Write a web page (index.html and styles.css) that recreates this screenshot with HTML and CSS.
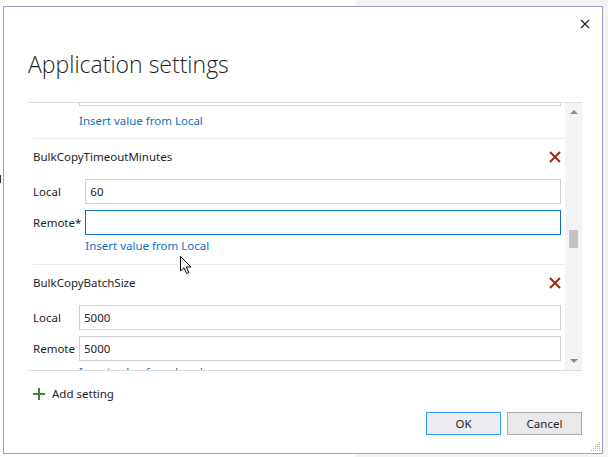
FILE: index.html
```html
<!DOCTYPE html>
<html lang="en">
<head>
    <meta charset="UTF-8">
    <title>Application settings</title>
    <link rel="stylesheet" href="styles.css">
</head>
<body>

    <div class="edge-mark"></div>

    <div class="dialog">
        <div class="dialog-top">
            <button class="close-btn" title="Close">
                <svg width="10" height="10" viewBox="0 0 10 10"><path d="M1 1 L9 9 M9 1 L1 9" stroke="#1e1e1e" stroke-width="1.2" fill="none"/></svg>
            </button>
        </div>

        <h1 class="dialog-title">Application settings</h1>

        <div class="settings-list">
            <div class="settings-scroll">
                <!-- posición de desplazamiento de la lista -->
                <div class="settings-items" style="margin-top: -22px;">

                    <!-- ajuste anterior, solo se ve su parte inferior -->
                    <div class="setting setting-partial">
                        <div class="setting-fields">
                            <input class="field-input" type="text" value="">
                            <a class="insert-link" href="#">Insert value from Local</a>
                        </div>
                    </div>

                    <div class="setting">
                        <div class="setting-head">
                            <span class="setting-name">BulkCopyTimeoutMinutes</span>
                            <button class="remove-btn"><svg width="12" height="12" viewBox="0 0 12 12"><path d="M1 1 L11 11 M11 1 L1 11" stroke="#a4260e" stroke-width="2" fill="none"/></svg></button>
                        </div>
                        <div class="setting-fields">
                            <label class="field-label">Local</label>
                            <input class="field-input" type="text" value="60">
                            <label class="field-label">Remote*</label>
                            <input class="field-input is-focused" type="text" value="">
                            <a class="insert-link" href="#">Insert value from Local</a>
                        </div>
                    </div>

                    <div class="setting">
                        <div class="setting-head">
                            <span class="setting-name">BulkCopyBatchSize</span>
                            <button class="remove-btn"><svg width="12" height="12" viewBox="0 0 12 12"><path d="M1 1 L11 11 M11 1 L1 11" stroke="#a4260e" stroke-width="2" fill="none"/></svg></button>
                        </div>
                        <div class="setting-fields">
                            <label class="field-label">Local</label>
                            <input class="field-input" type="text" value="5000">
                            <label class="field-label">Remote</label>
                            <input class="field-input" type="text" value="5000">
                            <a class="insert-link" href="#">Insert value from Local</a>
                        </div>
                    </div>

                </div>
            </div>

            <div class="scrollbar">
                <span class="arrow arrow-up"></span>
                <div class="track">
                    <div class="thumb" style="margin-top: 116px;"></div>
                </div>
                <span class="arrow arrow-down"></span>
            </div>
        </div>

        <div class="add-row">
            <svg width="12" height="12" viewBox="0 0 12 12"><path d="M6 0 V12 M0 6 H12" stroke="#388a34" stroke-width="2" fill="none"/></svg>
            <span>Add setting</span>
        </div>

        <div class="dialog-buttons">
            <button class="btn btn-default">OK</button>
            <button class="btn">Cancel</button>
        </div>

        <!-- asa de redimensionar -->
        <svg class="grip" width="10" height="10" viewBox="0 0 10 10" fill="#a9abb8">
            <rect x="8" y="0" width="1" height="1"/>
            <rect x="6" y="2" width="1" height="1"/><rect x="8" y="2" width="1" height="1"/>
            <rect x="4" y="4" width="1" height="1"/><rect x="6" y="4" width="1" height="1"/><rect x="8" y="4" width="1" height="1"/>
            <rect x="2" y="6" width="1" height="1"/><rect x="4" y="6" width="1" height="1"/><rect x="6" y="6" width="1" height="1"/><rect x="8" y="6" width="1" height="1"/>
            <rect x="0" y="8" width="1" height="1"/><rect x="2" y="8" width="1" height="1"/><rect x="4" y="8" width="1" height="1"/><rect x="6" y="8" width="1" height="1"/><rect x="8" y="8" width="1" height="1"/>
        </svg>
    </div>

    <!-- puntero del ratón -->
    <svg class="pointer" width="13" height="19" viewBox="0 0 13 19">
        <path d="M0.5 0.5 L0.5 15 L4 11.7 L6.6 17.6 L8.8 16.6 L6.3 11 L11 11 Z" fill="#fff" stroke="#000" stroke-width="1" stroke-linejoin="round"/>
    </svg>

</body>
</html>
```

FILE: styles.css
```css
  body {
      margin: 0;
      width: 608px;
      height: 457px;
      overflow: hidden;
      position: relative;
      font-family: 'Segoe UI', 'Noto Sans', sans-serif;
      font-size: 11.5px;
      color: #1e1e1e;
      background: linear-gradient(to right, #fff 355px, #f3f3f3 355px);
  }

  .edge-mark {
      position: absolute;
      left: 0;
      top: 175px;
      width: 1px;
      height: 8px;
      background-color: #333;
  }

  .dialog {
      position: relative;
      box-sizing: border-box;
      width: 600px;
      height: 448px;
      margin: 6px 0 0 3px;
      padding: 0 20px 0 24px;
      background-color: #fff;
      border: 1px solid #9ea1c6;
      display: flex;
      flex-direction: column;
  }

  .dialog-top {
      height: 41px;
      display: flex;
      justify-content: flex-end;
      align-items: flex-start;
  }

  .close-btn {
      margin: 12px -8px 0 0;
      padding: 0;
      width: 10px;
      height: 10px;
      border: none;
      background: none;
      display: flex;
  }

  .dialog-title {
      margin: 0;
      font-family: 'Open Sans', 'Noto Sans', sans-serif;
      font-weight: 300;
      font-size: 23px;
      line-height: 32px;
      color: #1e1e1e;
  }

  /* Lista de ajustes */
  .settings-list {
      margin-top: 22px;
      height: 267px;
      border-top: 1px solid #dcdce0;
      border-bottom: 1px solid #dcdce0;
      display: flex;
  }

  .settings-scroll {
      flex: 1;
      overflow: hidden;
      padding-left: 5px;
  }

  .setting {
      border-top: 1px solid #ebebeb;
      padding: 8px 4px 10px 0;
  }

  .setting-partial {
      border-top: none;
      padding: 0 4px 9px 0;
  }

  .setting-head {
      height: 20px;
      display: flex;
      justify-content: space-between;
      align-items: center;
  }

  .setting-name {
      line-height: 20px;
  }

  .remove-btn {
      padding: 0;
      border: none;
      background: none;
      width: 12px;
      height: 12px;
      display: flex;
  }

  .setting-fields {
      margin-top: 12px;
      display: grid;
      grid-template-columns: auto 1fr;
      column-gap: 4px;
      row-gap: 6px;
      align-items: center;
  }

  .setting-partial .setting-fields {
      margin: 0 0 0 46px;
      grid-template-columns: 1fr;
  }

  .field-input {
      box-sizing: border-box;
      height: 25px;
      width: 100%;
      margin: 0;
      padding: 0 4px;
      border: 1px solid #cccedb;
      font-family: inherit;
      font-size: 11.5px;
      color: #1e1e1e;
      outline: none;
  }

  .field-input.is-focused {
      border-color: #0e70c0;
  }

  .insert-link {
      grid-column: 2;
      margin-top: -3px;
      line-height: 16px;
      color: #0e70c0;
      text-decoration: none;
  }

  .setting-partial .insert-link {
      grid-column: 1;
      margin-top: 1px;
  }

  /* Barra de desplazamiento */
  .scrollbar {
      width: 17px;
      background-color: #f3f3f3;
      display: flex;
      flex-direction: column;
      align-items: center;
      padding: 7px 0 7px;
      box-sizing: border-box;
  }

  .arrow {
      width: 0;
      height: 0;
      border-left: 4px solid transparent;
      border-right: 4px solid transparent;
  }

  .arrow-up {
      border-bottom: 4px solid #868999;
  }

  .arrow-down {
      border-top: 4px solid #868999;
  }

  .track {
      flex: 1;
      width: 9px;
  }

  .thumb {
      width: 9px;
      height: 18px;
      background-color: #c2c3c9;
  }

  .add-row {
      margin-top: 15px;
      padding-left: 5px;
      line-height: 16px;
      display: flex;
      align-items: center;
      gap: 7px;
  }

  .dialog-buttons {
      margin-top: 10px;
      display: flex;
      justify-content: flex-end;
      gap: 6px;
  }

  .btn {
      box-sizing: border-box;
      width: 75px;
      height: 23px;
      padding: 0;
      border: 1px solid #acacac;
      background-color: #e9e9ec;
      font-family: inherit;
      font-size: 11.5px;
      color: #1e1e1e;
  }

  .btn-default {
      border-color: #3399ff;
      background-color: #ececf0;
  }

  .grip {
      position: absolute;
      right: 1px;
      bottom: 1px;
  }

  .pointer {
      position: absolute;
      left: 180px;
      top: 256px;
  }
```
